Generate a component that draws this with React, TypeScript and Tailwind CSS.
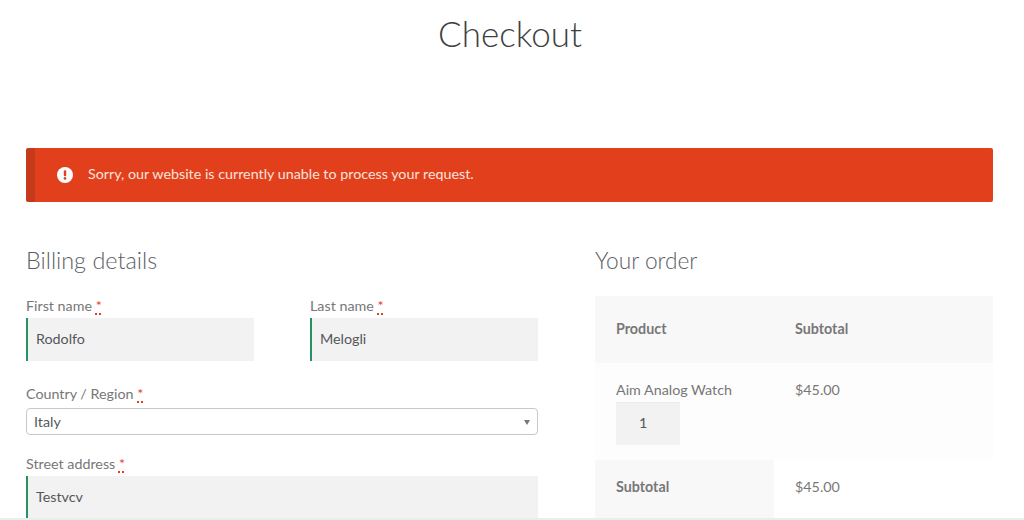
const sans = "font-['Lato','Noto_Sans',sans-serif]";

function Label({ text }: { text: string }) {
  return (
    <label className="block h-[22px] text-[14.3px] leading-[20px] text-[#777]">
      {text}{" "}
      <span className="text-[#e2401c] underline decoration-dotted decoration-[#e2401c] decoration-2 underline-offset-2">*</span>
    </label>
  );
}

function Field({ value }: { value: string }) {
  return (
    <div className="flex h-[43px] items-center border-l-2 border-[#2a8f63] bg-[#f2f2f2] pb-[2px] pl-2 text-[14.3px] text-[#55575c]">
      {value}
    </div>
  );
}

export default function App() {
  return (
    <div className={`${sans} relative h-[520px] w-[1024px] overflow-hidden bg-white`}>
      <h1 className="h-[148px] pt-[8px] pr-[4px] text-center text-[35px] leading-[50px] font-light text-[#3d3f44]">
        Checkout
      </h1>

      <div className="pr-[31px] pl-[26px]">
        {/* Error notice */}
        <div className="flex h-[54px] items-center rounded-[2px] border-l-[9px] border-[#c53a1a] bg-[#e2401c] pl-[22px] text-[14.3px] text-[#fbe3dc]">
          <svg width="16" height="16" viewBox="0 0 16 16" className="shrink-0">
            <circle cx="8" cy="8" r="8" fill="#fff" />
            <rect x="6.8" y="3.2" width="2.4" height="6" rx="1" fill="#e2401c" />
            <circle cx="8" cy="11.4" r="1.35" fill="#e2401c" />
          </svg>
          <span className="ml-[15px] pb-[2px]">Sorry, our website is currently unable to process your request.</span>
        </div>

        <div className="mt-[42px] flex">
          {/* Billing */}
          <div className="w-[512px]">
            <h3 className="h-[52px] text-[23.4px] leading-[32px] font-light text-[#5c5e63]">Billing details</h3>
            <div className="grid grid-cols-[228px_228px] gap-x-[56px]">
              <div>
                <Label text="First name" />
                <Field value="Rodolfo" />
              </div>
              <div>
                <Label text="Last name" />
                <Field value="Melogli" />
              </div>
            </div>
            <div className="mt-[23px]">
              <div className="mb-[2px]">
                <Label text="Country / Region" />
              </div>
              <div className="flex h-[27px] items-center justify-between rounded-[4px] border border-[#c8c8c8] px-[7px] pt-px text-[14.3px] text-[#55575c]">
                Italy
                <span className="h-0 w-0 border-x-[3.5px] border-t-[5px] border-x-transparent border-t-[#777]" />
              </div>
            </div>
            <div className="mt-[19px]">
              <Label text="Street address" />
              <Field value="Testvcv" />
            </div>
          </div>

          {/* Order */}
          <div className="ml-[57px] w-[398px]">
            <h3 className="h-[52px] text-[22.7px] leading-[34px] font-light text-[#5c5e63]">Your order</h3>
            <div className="text-[14.3px] text-[#777]">
              <div className="grid h-[67px] grid-cols-[179px_1fr] items-center bg-[#f8f8f8] pb-[2px]">
                <div className="pl-[21px] font-bold">Product</div>
                <div className="pl-[21px] font-bold">Subtotal</div>
              </div>
              <div className="grid h-[97px] grid-cols-[179px_1fr] bg-[#fdfdfd] pt-[16px]">
                <div className="pl-[21px]">
                  <div className="h-[23px] leading-[22px]">Aim Analog Watch</div>
                  <div className="flex h-[43px] w-[64px] items-center border-t border-[#ebebeb] bg-[#f2f2f2] pb-[2px] pl-[23px] text-[#55575c]">
                    1
                  </div>
                </div>
                <div className="pl-[21px] leading-[22px]">$45.00</div>
              </div>
              <div className="grid h-[60px] grid-cols-[179px_1fr]">
                <div className="bg-[#f8f8f8] pt-[16px] pl-[21px] leading-[22px] font-bold">Subtotal</div>
                <div className="pt-[16px] pl-[21px] leading-[22px]">$45.00</div>
              </div>
            </div>
          </div>
        </div>
      </div>

      {/* Bottom edge of the page */}
      <div className="absolute inset-x-0 bottom-0 h-[2px] bg-[#e6f0ee]" />
    </div>
  );
}
